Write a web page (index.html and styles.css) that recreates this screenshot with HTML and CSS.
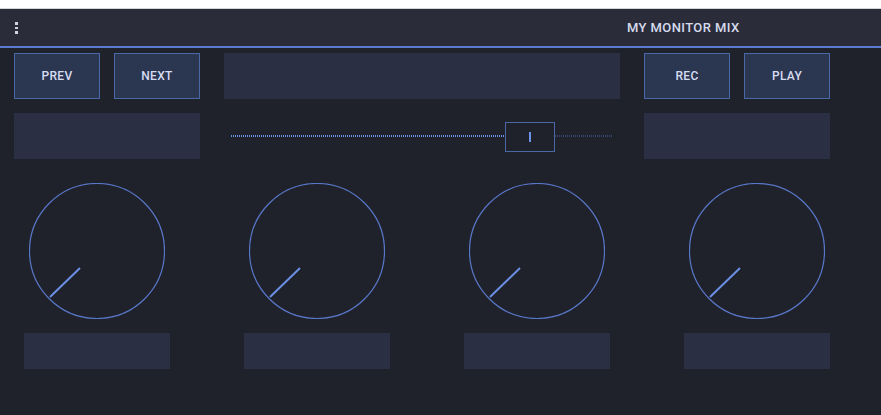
FILE: index.html
```html
<!DOCTYPE html>
<html>
<head>
<meta charset="utf-8">
<link rel="stylesheet" href="styles.css">
</head>
<body>
<div class="app">
  <header class="topbar">
    <div class="menu"><span></span><span></span><span></span></div>
    <div class="title">MY MONITOR MIX</div>
  </header>
  <main class="content">
    <div class="row">
      <div class="group">
        <button class="btn">PREV</button>
        <button class="btn">NEXT</button>
      </div>
      <div class="display"></div>
      <div class="group">
        <button class="btn">REC</button>
        <button class="btn">PLAY</button>
      </div>
    </div>
    <div class="row row2">
      <div class="panel"></div>
      <div class="slider">
        <div class="track-on"></div>
        <div class="thumb"><span></span></div>
        <div class="track-off"></div>
      </div>
      <div class="panel"></div>
    </div>
    <div class="knobs">
      <div class="knob">
        <svg width="136" height="136" viewBox="0 0 136 136"><circle cx="68" cy="68" r="67.5" fill="none" stroke="#5877c8" stroke-width="1.2"/><line x1="21" y1="114" x2="51" y2="85" stroke="#6b8fe4" stroke-width="2"/></svg>
        <div class="label"></div>
      </div>
      <div class="knob">
        <svg width="136" height="136" viewBox="0 0 136 136"><circle cx="68" cy="68" r="67.5" fill="none" stroke="#5877c8" stroke-width="1.2"/><line x1="21" y1="114" x2="51" y2="85" stroke="#6b8fe4" stroke-width="2"/></svg>
        <div class="label"></div>
      </div>
      <div class="knob">
        <svg width="136" height="136" viewBox="0 0 136 136"><circle cx="68" cy="68" r="67.5" fill="none" stroke="#5877c8" stroke-width="1.2"/><line x1="21" y1="114" x2="51" y2="85" stroke="#6b8fe4" stroke-width="2"/></svg>
        <div class="label"></div>
      </div>
      <div class="knob">
        <svg width="136" height="136" viewBox="0 0 136 136"><circle cx="68" cy="68" r="67.5" fill="none" stroke="#5877c8" stroke-width="1.2"/><line x1="21" y1="114" x2="51" y2="85" stroke="#6b8fe4" stroke-width="2"/></svg>
        <div class="label"></div>
      </div>
    </div>
  </main>
</div>
</body>
</html>
```
FILE: styles.css
```css
html, body {
  margin: 0;
  padding: 0;
  background: #ffffff;
  height: 100%;
}
body {
  padding-top: 8px;
  box-sizing: border-box;
  font-family: Roboto, "Liberation Sans", sans-serif;
}
.app {
  border-top: 1px solid #d6d6d6;
  background: #20222b;
  height: calc(100% - 1px);
}
.topbar {
  height: 37px;
  background: #2a2d39;
  display: flex;
  align-items: center;
  border-bottom: 2px solid #5a7bd0;
}
.menu {
  display: flex;
  flex-direction: column;
  gap: 2px;
  margin-left: 15px;
  margin-top: 1px;
}
.menu span {
  width: 3px;
  height: 2.4px;
  background: #d0d4e4;
}
.title {
  margin-left: 609px;
  color: #d6dbef;
  font-size: 13px;
  font-weight: 500;
  letter-spacing: 0.4px;
}
.content {
  padding: 5px 0 0 14px;
}
.row {
  display: flex;
  gap: 24px;
}
.group {
  display: flex;
  gap: 14px;
}
.btn {
  width: 86px;
  height: 46px;
  box-sizing: border-box;
  background: #2b3650;
  border: 1px solid #4a67a6;
  color: #d6dcf2;
  font-family: Roboto, "Liberation Sans", sans-serif;
  font-size: 12px;
  font-weight: 500;
  letter-spacing: 0.3px;
  padding: 0;
  margin: 0;
}
.display {
  width: 396px;
  height: 46px;
  background: #2a2f43;
}
.row2 {
  margin-top: 14px;
}
.panel {
  width: 186px;
  height: 46px;
  background: #2a2f43;
}
.slider {
  width: 396px;
  height: 46px;
  display: flex;
  align-items: center;
  padding: 0 8px 0 7px;
  box-sizing: border-box;
}
.track-on {
  width: 274px;
  height: 2px;
  background: repeating-linear-gradient(90deg, #6d91e6 0 1px, transparent 1px 2px);
}
.track-off {
  flex: 1;
  height: 2px;
  background: repeating-linear-gradient(90deg, #34456f 0 1px, transparent 1px 2px);
}
.thumb {
  width: 50px;
  height: 30px;
  box-sizing: border-box;
  border: 1px solid #4a67a6;
  display: flex;
  align-items: center;
  justify-content: center;
  margin-top: 1px;
}
.thumb span {
  width: 2px;
  height: 10px;
  background: #6d91e6;
}
.knobs {
  display: flex;
  gap: 74px;
  padding-left: 10px;
  margin-top: 24px;
}
.knob {
  width: 146px;
  display: flex;
  flex-direction: column;
  align-items: center;
}
.knob svg {
  display: block;
}
.label {
  width: 146px;
  height: 36px;
  background: #2a2f43;
  margin-top: 14px;
}
```
